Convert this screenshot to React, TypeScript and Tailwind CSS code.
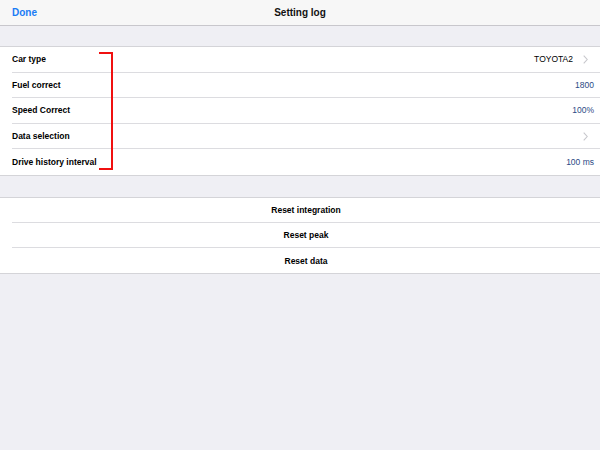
import React from "react";

const font = { fontFamily: '"Liberation Sans", Arial, sans-serif' };

function Chevron() {
  return (
    <svg width="5" height="9" viewBox="0 0 5 9" className="ml-[10px] mr-[6px]">
      <path d="M0.7 0.7 L4.2 4.5 L0.7 8.3" fill="none" stroke="#c7c7cc" strokeWidth="1.1" />
    </svg>
  );
}

type Row = { label: string; value?: string; dark?: boolean; chevron?: boolean };

const rows: Row[] = [
  { label: "Car type", value: "TOYOTA2", dark: true, chevron: true },
  { label: "Fuel correct", value: "1800" },
  { label: "Speed Correct", value: "100%" },
  { label: "Data selection", chevron: true },
  { label: "Drive history interval", value: "100 ms" },
];

export default function App() {
  return (
    <div className="w-[600px] h-[450px] bg-[#efeff4] overflow-hidden" style={font}>
      <div className="h-[26px] bg-[#f7f7f7] border-b border-[#c8c7cc] flex items-center relative">
        <span className="ml-[12px] text-[10px] font-bold text-[#1a7cf5]">Done</span>
        <span className="absolute left-0 right-0 text-center text-[10px] font-bold text-[#111]">Setting log</span>
      </div>
      <div className="h-[20px]" />
      <div className="bg-white border-t border-b border-[#d4d4d8] relative">
        {rows.map((r, i) => (
          <div key={r.label} className="pl-[12px]">
            <div
              className={
                "h-[25.5px] pt-[1px] flex items-center pr-[6px] " +
                (i < rows.length - 1 ? "border-b border-[#dcdce0]" : "")
              }
            >
              <span className="text-[8.5px] font-bold text-black flex-1">{r.label}</span>
              {r.value && (
                <span className={"text-[8.5px] " + (r.dark ? "text-black" : "text-[#2c4a85]")}>
                  {r.value}
                </span>
              )}
              {r.chevron && <Chevron />}
            </div>
          </div>
        ))}
        <div className="absolute left-[99px] top-[5px] w-[14px] h-[118px] border-t-2 border-r-2 border-b-2 border-[#f01010]" />
      </div>
      <div className="h-[21px]" />
      <div className="bg-white border-t border-b border-[#d4d4d8]">
        {["Reset integration", "Reset peak", "Reset data"].map((t, i) => (
          <div key={t} className="pl-[12px]">
            <div
              className={
                "h-[25.3px] pt-[1px] flex items-center justify-center " +
                (i < 2 ? "border-b border-[#dcdce0]" : "")
              }
            >
              <span className="text-[8.5px] font-bold text-black">{t}</span>
            </div>
          </div>
        ))}
      </div>
    </div>
  );
}
